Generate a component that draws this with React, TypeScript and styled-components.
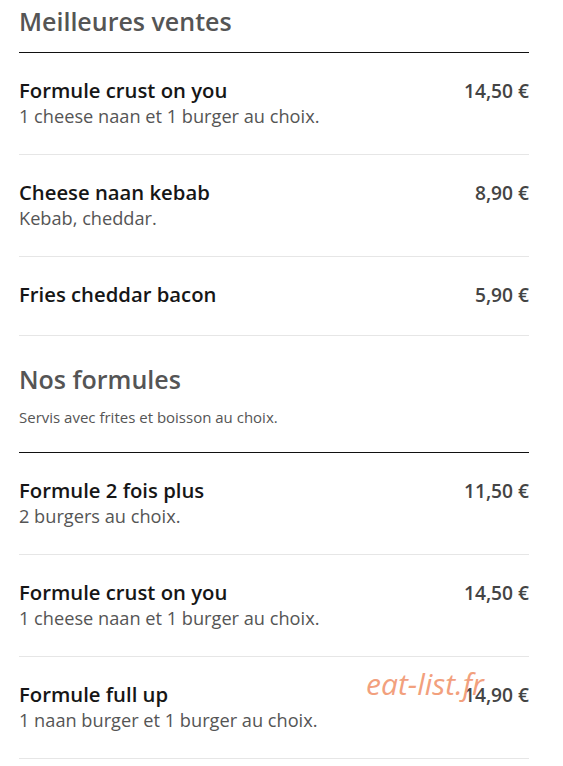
import { FC } from 'react';
import styled, { createGlobalStyle } from 'styled-components';

type Dish = {
  name: string;
  description?: string;
  price: string;
};

type Section = {
  title: string;
  note?: string;
  dishes: Dish[];
};

const sections: Section[] = [
  {
    title: 'Meilleures ventes',
    dishes: [
      { name: 'Formule crust on you', description: '1 cheese naan et 1 burger au choix.', price: '14,50 €' },
      { name: 'Cheese naan kebab', description: 'Kebab, cheddar.', price: '8,90 €' },
      { name: 'Fries cheddar bacon', price: '5,90 €' },
    ],
  },
  {
    title: 'Nos formules',
    note: 'Servis avec frites et boisson au choix.',
    dishes: [
      { name: 'Formule 2 fois plus', description: '2 burgers au choix.', price: '11,50 €' },
      { name: 'Formule crust on you', description: '1 cheese naan et 1 burger au choix.', price: '14,50 €' },
      { name: 'Formule full up', description: '1 naan burger et 1 burger au choix.', price: '14,90 €' },
    ],
  },
];

const DishRow: FC<{ dish: Dish }> = ({ dish }) => (
  <Row>
    <Details>
      <Name>{dish.name}</Name>
      {dish.description && <Description>{dish.description}</Description>}
    </Details>
    <Price>{dish.price}</Price>
  </Row>
);

const MenuSection: FC<{ section: Section }> = ({ section }) => (
  <SectionWrapper>
    <SectionHead>
      <Heading>{section.title}</Heading>
      {section.note && <Note>{section.note}</Note>}
    </SectionHead>
    {section.dishes.map((dish, i) => (
      <DishRow key={i} dish={dish} />
    ))}
  </SectionWrapper>
);

export default function App() {
  return (
    <>
      <GlobalStyle />
      <Page>
        {sections.map(section => (
          <MenuSection key={section.title} section={section} />
        ))}
        {/* watermark sits over the last price, as in the source */}
        <Watermark>eat-list.fr</Watermark>
      </Page>
    </>
  );
}

const GlobalStyle = createGlobalStyle`
  body {
    margin: 0;
    background: #fff;
    font-family: "Open Sans", "Noto Sans", sans-serif;
  }
`;

const Page = styled.div`
  position: relative;
  width: 510px;
  padding: 3px 0 0 19px;
  display: flex;
  flex-direction: column;
  gap: 25px;
`;

const SectionWrapper = styled.section`
  display: flex;
  flex-direction: column;
`;

const SectionHead = styled.div`
  border-bottom: 1px solid #111;
  padding-bottom: 13px;
`;

const Heading = styled.h2`
  margin: 0;
  font-size: 25px;
  line-height: 36px;
  font-weight: 600;
  color: #555;
`;

const Note = styled.p`
  margin: 10px 0 12px;
  font-size: 15px;
  line-height: 20px;
  color: #555;
`;

const Row = styled.div`
  display: flex;
  justify-content: space-between;
  align-items: flex-start;
  padding: 23px 0 26px;
  border-bottom: 1px solid #e6e6e6;
`;

const Details = styled.div`
  display: flex;
  flex-direction: column;
`;

const Name = styled.div`
  font-size: 20.3px;
  line-height: 29px;
  font-weight: 600;
  color: #161616;
`;

const Description = styled.div`
  font-size: 18.2px;
  line-height: 23px;
  color: #555;
`;

const Price = styled.div`
  font-size: 19.2px;
  line-height: 29px;
  font-weight: 600;
  color: #444;
`;

const Watermark = styled.span`
  position: absolute;
  left: 366px;
  top: 662px;
  font-size: 30px;
  line-height: 44px;
  font-style: italic;
  color: #f2a07d;
  pointer-events: none;
`;
